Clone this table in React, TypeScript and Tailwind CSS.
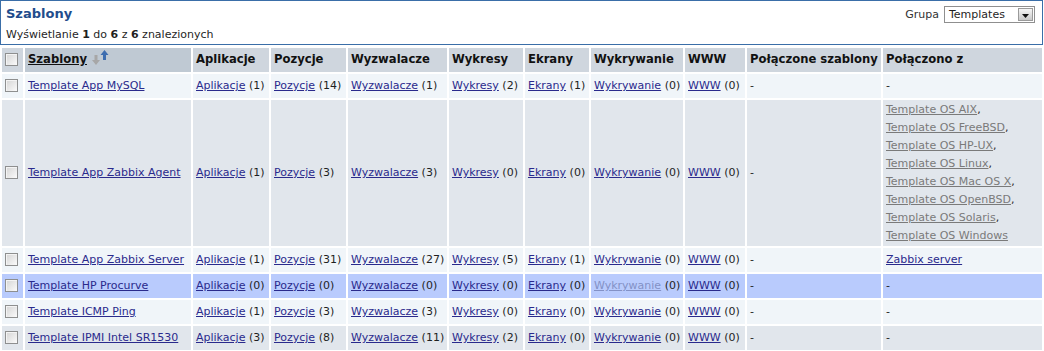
import React from "react"

interface Row {
    name: string
    apps: number
    items: number
    triggers: number
    graphs: number
    screens: number
    discovery: number
    web: number
    linkedTo: string[]
    linkedGray?: boolean
    highlight?: boolean
    discoveryFaded?: boolean
}

const rows: Row[] = [
    { name: "Template App MySQL", apps: 1, items: 14, triggers: 1, graphs: 2, screens: 1, discovery: 0, web: 0, linkedTo: [] },
    {
        name: "Template App Zabbix Agent", apps: 1, items: 3, triggers: 3, graphs: 0, screens: 0, discovery: 0, web: 0,
        linkedGray: true,
        linkedTo: [
            "Template OS AIX",
            "Template OS FreeBSD",
            "Template OS HP-UX",
            "Template OS Linux",
            "Template OS Mac OS X",
            "Template OS OpenBSD",
            "Template OS Solaris",
            "Template OS Windows",
        ],
    },
    { name: "Template App Zabbix Server", apps: 1, items: 31, triggers: 27, graphs: 5, screens: 1, discovery: 0, web: 0, linkedTo: ["Zabbix server"] },
    { name: "Template HP Procurve", apps: 0, items: 0, triggers: 0, graphs: 0, screens: 0, discovery: 0, web: 0, linkedTo: [], highlight: true, discoveryFaded: true },
    { name: "Template ICMP Ping", apps: 1, items: 3, triggers: 3, graphs: 0, screens: 0, discovery: 0, web: 0, linkedTo: [] },
    { name: "Template IPMI Intel SR1530", apps: 3, items: 8, triggers: 11, graphs: 2, screens: 0, discovery: 0, web: 0, linkedTo: [] },
]

const Checkbox = () => (
    <span className="inline-block size-[13px] align-middle border border-[#8e8f8f] bg-gradient-to-br from-[#d4d4d4] to-[#fbfbfb] shadow-[inset_1px_1px_0_#f4f4f4]" />
)

// grey "down" + blue "up" sort marker
const SortArrows = () => (
    <svg width="17" height="15" viewBox="0 0 17 15" className="inline-block ml-[5px] -mt-[5px] align-middle">
        <path d="M2.5 5h3v5H8L4 15 0 10h2.5z" fill="#a7a7a7" />
        <path d="M11 10h3V5h2.5L12.5 0 8.5 5H11z" fill="#3d6db0" />
    </svg>
)

const Cell: React.FC<{ label: string; count: number; faded?: boolean }> = ({ label, count, faded }) => (
    <>
        <a href="#" className={`underline ${faded ? "text-[#8391c6]" : "text-[#2a2a8c]"}`}>{label}</a> ({count})
    </>
)

const headers = ["Aplikacje", "Pozycje", "Wyzwalacze", "Wykresy", "Ekrany", "Wykrywanie", "WWW", "Połączone szablony", "Połączono z"]
const widths = ["w-[76px]", "w-[75px]", "w-[99px]", "w-[74px]", "w-[64px]", "w-[92px]", "w-[60px]", "w-[134px]", "w-[159px]"]

export default function App() {
    return (
        <div className="w-[1044px] bg-white text-[11px] text-[#1f1f1f]" style={{ fontFamily: "'DejaVu Sans', Verdana, sans-serif" }}>
            <div className="w-[1043px] h-[45px] border border-[#3a6ea8] flex justify-between px-[5px]">
                <div className="flex flex-col">
                    <h1 className="text-[13px] font-bold text-[#214c8c] leading-[16px] mt-[5px]">Szablony</h1>
                    <p className="mt-[6px] leading-[14px]">
                        Wyświetlanie <b>1</b> do <b>6</b> z <b>6</b> znalezionych
                    </p>
                </div>
                <div className="flex items-start gap-[5px] mt-[5px] mr-[2px]">
                    <span className="leading-[16px] text-[#333] mt-px">Grupa</span>
                    <div className="w-[91px] h-[17px] border border-[#8f8f8f] flex items-center justify-between pl-[4px] pr-px">
                        <span className="leading-[15px]">Templates</span>
                        <span className="w-[15px] h-[13px] border border-[#9a9a9a] bg-gradient-to-b from-[#f6f6f6] to-[#c9c9c9] flex items-end justify-center pb-[2px]">
                            <svg width="7" height="4" viewBox="0 0 7 4"><path d="M0 0h7L3.5 4z" fill="#111" /></svg>
                        </span>
                    </div>
                </div>
            </div>
            <table className="table-fixed w-[1044px] border-separate border-spacing-[2px] mt-px">
                <thead>
                    <tr className="h-[24px] text-left">
                        <th className="w-[21px] bg-[#cfd6de] pl-[3px] align-middle"><Checkbox /></th>
                        <th className="w-[166px] bg-[#bfc9d3] px-[3px] text-[11.6px] font-bold text-[#111] whitespace-nowrap">
                            <a href="#" className="underline">Szablony</a>
                            <SortArrows />
                        </th>
                        {headers.map((h, i) => (
                            <th key={h} className={`${widths[i]} bg-[#cfd6de] px-[3px] text-[11.6px] font-bold text-[#111] whitespace-nowrap`}>{h}</th>
                        ))}
                    </tr>
                </thead>
                <tbody>
                    {rows.map((r, i) => {
                        const bg = r.highlight ? "bg-[#b9cbfd]" : i % 2 === 0 ? "bg-[#f0f5f9]" : "bg-[#e1e6ec]"
                        const td = `${bg} px-[3px] py-[3px] leading-[18px] whitespace-nowrap align-middle`
                        return (
                            <tr key={r.name}>
                                <td className={`${bg} pl-[3px] align-middle`}><Checkbox /></td>
                                <td className={td}><a href="#" className="underline text-[#2a2a8c]">{r.name}</a></td>
                                <td className={td}><Cell label="Aplikacje" count={r.apps} /></td>
                                <td className={td}><Cell label="Pozycje" count={r.items} /></td>
                                <td className={td}><Cell label="Wyzwalacze" count={r.triggers} /></td>
                                <td className={td}><Cell label="Wykresy" count={r.graphs} /></td>
                                <td className={td}><Cell label="Ekrany" count={r.screens} /></td>
                                <td className={td}><Cell label="Wykrywanie" count={r.discovery} faded={r.discoveryFaded} /></td>
                                <td className={td}><Cell label="WWW" count={r.web} /></td>
                                <td className={td}>-</td>
                                <td className={`${bg} px-[3px] ${r.linkedTo.length > 1 ? "py-px" : "py-[3px]"} leading-[18px] whitespace-nowrap align-middle`}>
                                    {r.linkedTo.length === 0 && "-"}
                                    {r.linkedTo.map((t, j) => (
                                        <div key={t}>
                                            <a href="#" className={`underline ${r.linkedGray ? "text-[#7a7a7a]" : "text-[#2a2a8c]"}`}>{t}</a>
                                            {j < r.linkedTo.length - 1 && ","}
                                        </div>
                                    ))}
                                </td>
                            </tr>
                        )
                    })}
                </tbody>
            </table>
        </div>
    )
}
